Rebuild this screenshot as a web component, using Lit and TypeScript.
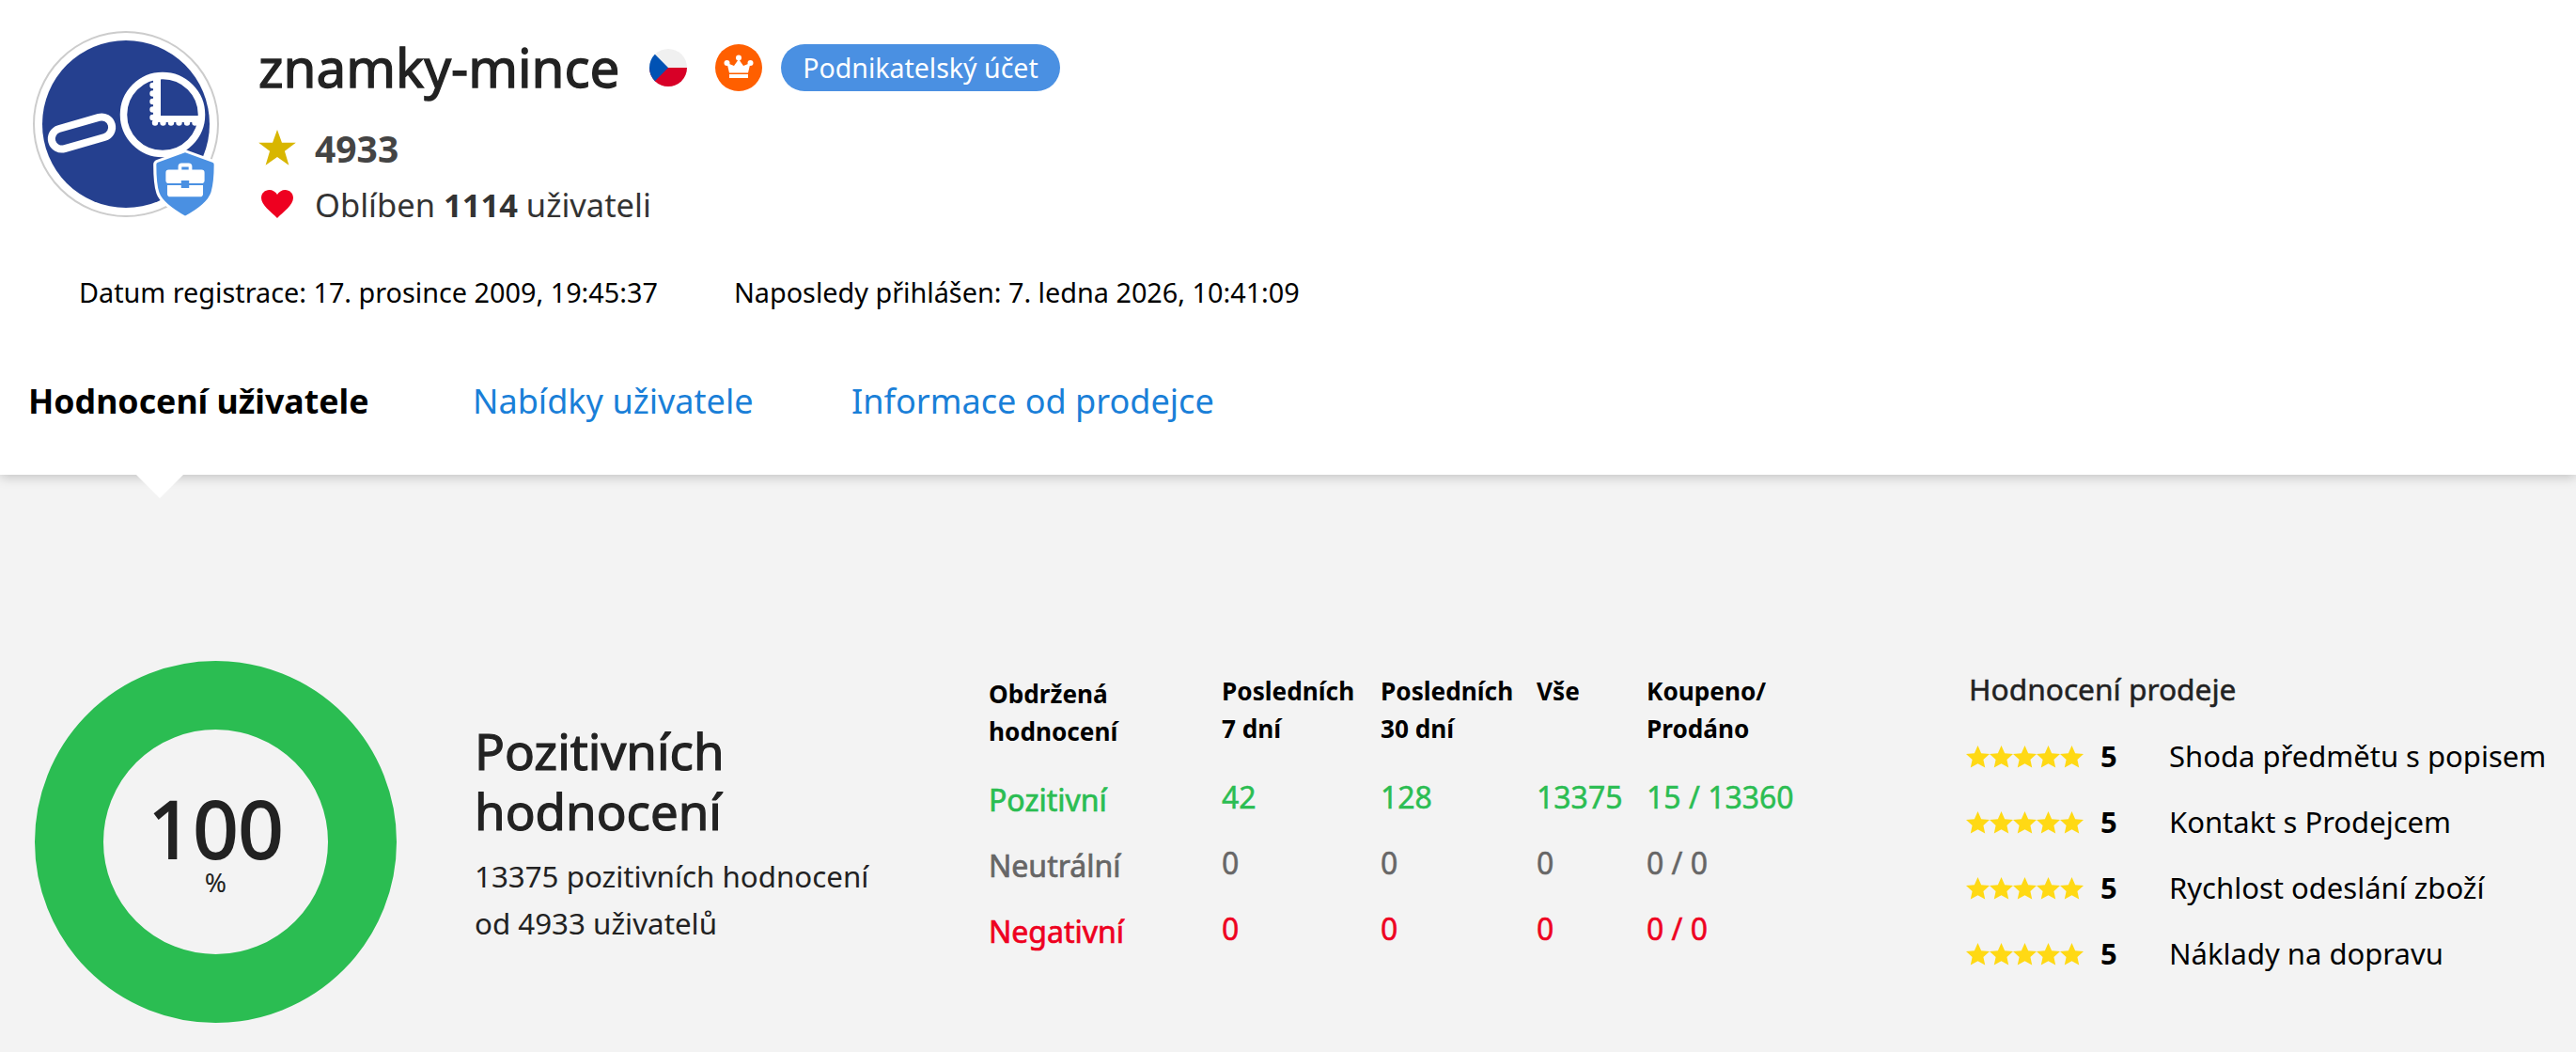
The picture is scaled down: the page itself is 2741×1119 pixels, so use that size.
import { LitElement, html, css, svg } from "lit";
import { customElement } from "lit/decorators.js";

const STAR = "M12 1.5l3.2 7.1 7.8.8-5.8 5.2 1.6 7.6L12 18.4l-6.8 3.8 1.6-7.6L1 9.4l7.8-.8z";

// perforated edge of the stamp: white teeth on the outer side of the L
const stampTeeth = () => {
    const dots = [];
    for (let i = 0; i < 5; i++) {
        dots.push(svg`<circle cx="127.500" cy=${58 + i * 8.500} r="3.200" fill="#fff"/>`);
    }
    for (let i = 0; i < 6; i++) {
        dots.push(svg`<circle cx=${130 + i * 8.500} cy="97.500" r="3.200" fill="#fff"/>`);
    }
    return dots;
};

@customElement("app-root")
export class AppRoot extends LitElement {
    static styles = css`
        :host {
            display: flex;
            flex-direction: column;
            min-height: 100vh;
            background: #f3f3f3;
            font-family: "Noto Sans", sans-serif;
            color: #222;
        }

        .header {
            position: relative;
            height: 505px;
            box-sizing: border-box;
            background: #fff;
            box-shadow: 0 2px 12px rgba(0, 0, 0, 0.22);
            padding-top: 33px;
        }

        .pointer {
            position: absolute;
            left: 145px;
            top: 505px;
            width: 0;
            height: 0;
            border-left: 25.5px solid transparent;
            border-right: 25.5px solid transparent;
            border-top: 25px solid #fff;
        }

        .profile {
            display: flex;
            padding-left: 35px;
        }

        .avatar {
            position: relative;
            width: 198px;
            height: 198px;
            margin-right: 42px;
        }

        .avatar svg {
            display: block;
        }

        .avatar .shield {
            position: absolute;
            left: 124.5px;
            top: 124px;
        }

        .info {
            display: flex;
            flex-direction: column;
            padding-top: 14px;
        }

        .title-row {
            display: flex;
            align-items: center;
            height: 50px;
        }

        .title-row svg {
            display: block;
        }

        .name {
            width: 416px;
            font-size: 56.500px;
            line-height: 50px;
            -webkit-text-stroke: 1.3px #222;
            color: #222;
        }

        .flag {
            margin-right: 30px;
        }

        .crown {
            margin-right: 20px;
        }

        .badge {
            display: flex;
            align-items: center;
            justify-content: center;
            width: 297px;
            height: 50px;
            border-radius: 25px;
            background: #4a90e2;
            color: #fff;
            font-size: 28.500px;
        }

        .stat {
            display: flex;
            align-items: center;
            height: 60px;
        }

        .stat .icon {
            display: flex;
            justify-content: center;
            width: 40px;
            margin-right: 20px;
        }

        .rating {
            margin-top: 30px;
            font-size: 39px;
            font-weight: 700;
            color: #444;
        }

        .liked {
            font-size: 34.500px;
            color: #333;
        }

        .liked b {
            font-weight: 700;
        }

        .dates {
            display: flex;
            gap: 81px;
            margin-top: 44px;
            padding-left: 84px;
            font-size: 28.800px;
            line-height: 40px;
            color: #000;
        }

        .tabs {
            display: grid;
            grid-template-columns: 473px 403px auto;
            margin-top: 70px;
            padding-left: 30px;
            font-size: 36.100px;
            line-height: 50px;
            color: #1a7fd8;
        }

        .tabs .active {
            font-size: 35.700px;
            font-weight: 700;
            color: #000;
        }

        .stats {
            display: flex;
            padding: 198px 0 0 37px;
        }

        .donut {
            display: flex;
            flex-direction: column;
            align-items: center;
            justify-content: center;
            box-sizing: border-box;
            width: 385px;
            height: 385px;
            margin-right: 83px;
            border: 73.5px solid #2bbd52;
            border-radius: 50%;
            color: #222;
        }

        .donut .value {
            font-size: 84px;
            line-height: 84px;
            -webkit-text-stroke: 2px #222;
        }

        .donut .unit {
            font-size: 28px;
            line-height: 30px;
        }

        .summary {
            width: 547px;
            padding-top: 64px;
        }

        .summary h2 {
            margin: 0;
            font-size: 52.800px;
            font-weight: 400;
            line-height: 64px;
            -webkit-text-stroke: 1.2px #222;
        }

        .summary p {
            margin: 12px 0 0;
            font-size: 31.300px;
            line-height: 50px;
        }

        .table {
            display: grid;
            grid-template-columns: 248px 169px 166px 117px 340px;
            grid-template-rows: 95px 70px 70px 70px;
            width: 1040px;
            padding-top: 12px;
            font-size: 32px;
            line-height: 40px;
        }

        .table .head {
            font-size: 26.200px;
            font-weight: 700;
            color: #000;
        }

        .table .head.first {
            padding-top: 3px;
        }

        .table .row-label {
            padding-top: 21px;
            -webkit-text-stroke: 0.7px currentColor;
        }

        .table .val {
            padding-top: 18px;
            -webkit-text-stroke: 0.5px currentColor;
        }

        .pos {
            color: #2bbd52;
        }

        .neu {
            color: #666;
        }

        .neg {
            color: #ee0020;
        }

        .sale-heading {
            height: 40px;
            margin: 0 0 17px 3px;
            padding-top: 10px;
            font-size: 31.700px;
            line-height: 40px;
            -webkit-text-stroke: 0.5px #222;
            color: #222;
        }

        .sale-row {
            display: flex;
            align-items: center;
            height: 70px;
            font-size: 31px;
            color: #000;
        }

        .sale-row .stars {
            display: flex;
            width: 143px;
        }

        .sale-row .stars svg {
            display: block;
        }

        .sale-row .score {
            width: 73px;
            padding-bottom: 3px;
            font-weight: 700;
        }

        .sale-row .label {
            padding-bottom: 3px;
        }
    `;

    renderStars() {
        return html`<span class="stars">
            ${[0, 1, 2, 3, 4].map(() => html`<svg width="25" height="24" viewBox="1 1.500 22 21"><path fill="#ffd914" d=${STAR}/></svg>`)}
        </span>`;
    }

    renderAvatar() {
        return html`<div class="avatar">
            <svg width="198" height="198" viewBox="0 0 198 198">
                <circle cx="99" cy="99" r="98" fill="#fff" stroke="#ccc" stroke-width="2"/>
                <circle cx="99" cy="99" r="89" fill="#25408f"/>
                <rect x="-33" y="-11" width="66" height="22" rx="11" transform="translate(52 108.500) rotate(-16)" fill="#25408f" stroke="#fff" stroke-width="8"/>
                <circle cx="138" cy="89" r="41.500" fill="#25408f" stroke="#fff" stroke-width="7.500"/>
                <path fill="#fff" d="M128 47h8v43h43v7h-51z"/>
                ${stampTeeth()}
            </svg>
            <svg class="shield" width="74" height="78" viewBox="0 0 70 76" preserveAspectRatio="none">
                <path d="M35 3.500l28 10.500c1.600.6 2.500 1.800 2.500 3.500 0 10-.5 20-3 29-3 10-13 18-27.500 26C20.500 64 10.500 56 7.500 47c-3-9-3-19-3-29.500 0-1.700.9-2.900 2.500-3.500z" fill="#4a90e2" stroke="#fff" stroke-width="3" stroke-linejoin="round"/>
                <path fill="#fff" d="M28 19.500a3.500 3.500 0 0 1 3.500-3.500h7a3.500 3.500 0 0 1 3.500 3.500V23h9.500a3 3 0 0 1 3 3v8a3 3 0 0 1-3 3H39v-3h-8v3H18.500a3 3 0 0 1-3-3v-8a3 3 0 0 1 3-3H28zM31.500 20v3h7v-3z"/>
                <path fill="#fff" d="M17 39h14v3h8v-3h14v9a3 3 0 0 1-3 3H20a3 3 0 0 1-3-3z"/>
            </svg>
        </div>`;
    }

    render() {
        return html`
        <div class="header">
            <div class="profile">
                ${this.renderAvatar()}
                <div class="info">
                    <div class="title-row">
                        <span class="name">znamky-mince</span>
                        <svg class="flag" width="40" height="40" viewBox="0 0 40 40">
                            <circle cx="20" cy="20" r="20" fill="#f0f0f0"/>
                            <path fill="#d80027" d="M0 20h40a20 20 0 0 1-40 0z"/>
                            <path fill="#0052b4" d="M5.860 5.860L20 20 5.860 34.140a20 20 0 0 1 0-28.280z"/>
                        </svg>
                        <svg class="crown" width="50" height="50" viewBox="0 0 50 50">
                            <circle cx="25" cy="25" r="25" fill="#ff5f00"/>
                            <circle cx="25" cy="14.500" r="3" fill="#fff"/>
                            <circle cx="12.500" cy="20" r="3" fill="#fff"/>
                            <circle cx="37.500" cy="20" r="3" fill="#fff"/>
                            <path fill="#fff" d="M25 16l5 7 7.500-3-2.500 10.500H15L12.500 20l7.500 3z"/>
                            <rect x="15" y="32" width="20" height="4" fill="#fff"/>
                        </svg>
                        <span class="badge">Podnikatelský účet</span>
                    </div>
                    <div class="stat rating">
                        <span class="icon"><svg width="40" height="38" viewBox="0 0 24 23"><path fill="#d8b600" d="M12 0l3 8.300h9l-7.200 5.500 2.700 9L12 17.600 4.500 22.800l2.700-9L0 8.300h9z"/></svg></span>
                        <span>4933</span>
                    </div>
                    <div class="stat liked">
                        <span class="icon"><svg width="34" height="30" viewBox="0 0 34 30"><path fill="#ee0020" d="M17 30C10 23 0 16 0 8.500 0 3.500 4 0 8.500 0 12 0 15.500 2 17 5c1.500-3 5-5 8.500-5C30 0 34 3.500 34 8.500 34 16 24 23 17 30z"/></svg></span>
                        <span>Oblíben <b>1114</b> uživateli</span>
                    </div>
                </div>
            </div>
            <div class="dates">
                <span>Datum registrace: 17. prosince 2009, 19:45:37</span>
                <span>Naposledy přihlášen: 7. ledna 2026, 10:41:09</span>
            </div>
            <div class="tabs">
                <span class="active">Hodnocení uživatele</span>
                <span>Nabídky uživatele</span>
                <span>Informace od prodejce</span>
            </div>
            <div class="pointer"></div>
        </div>

        <div class="stats">
            <div class="donut">
                <span class="value">100</span>
                <span class="unit">%</span>
            </div>
            <div class="summary">
                <h2>Pozitivních<br>hodnocení</h2>
                <p>13375 pozitivních hodnocení<br>od 4933 uživatelů</p>
            </div>
            <div class="table">
                <div class="head first">Obdržená<br>hodnocení</div>
                <div class="head">Posledních<br>7 dní</div>
                <div class="head">Posledních<br>30 dní</div>
                <div class="head">Vše</div>
                <div class="head">Koupeno/<br>Prodáno</div>

                <div class="row-label pos">Pozitivní</div>
                <div class="val pos">42</div>
                <div class="val pos">128</div>
                <div class="val pos">13375</div>
                <div class="val pos">15 / 13360</div>

                <div class="row-label neu">Neutrální</div>
                <div class="val neu">0</div>
                <div class="val neu">0</div>
                <div class="val neu">0</div>
                <div class="val neu">0 / 0</div>

                <div class="row-label neg">Negativní</div>
                <div class="val neg">0</div>
                <div class="val neg">0</div>
                <div class="val neg">0</div>
                <div class="val neg">0 / 0</div>
            </div>
            <div class="sale">
                <div class="sale-heading">Hodnocení prodeje</div>
                ${["Shoda předmětu s popisem", "Kontakt s Prodejcem", "Rychlost odeslání zboží", "Náklady na dopravu"].map((label) => html`
                    <div class="sale-row">
                        ${this.renderStars()}
                        <span class="score">5</span>
                        <span class="label">${label}</span>
                    </div>
                `)}
            </div>
        </div>
        `;
    }
}
